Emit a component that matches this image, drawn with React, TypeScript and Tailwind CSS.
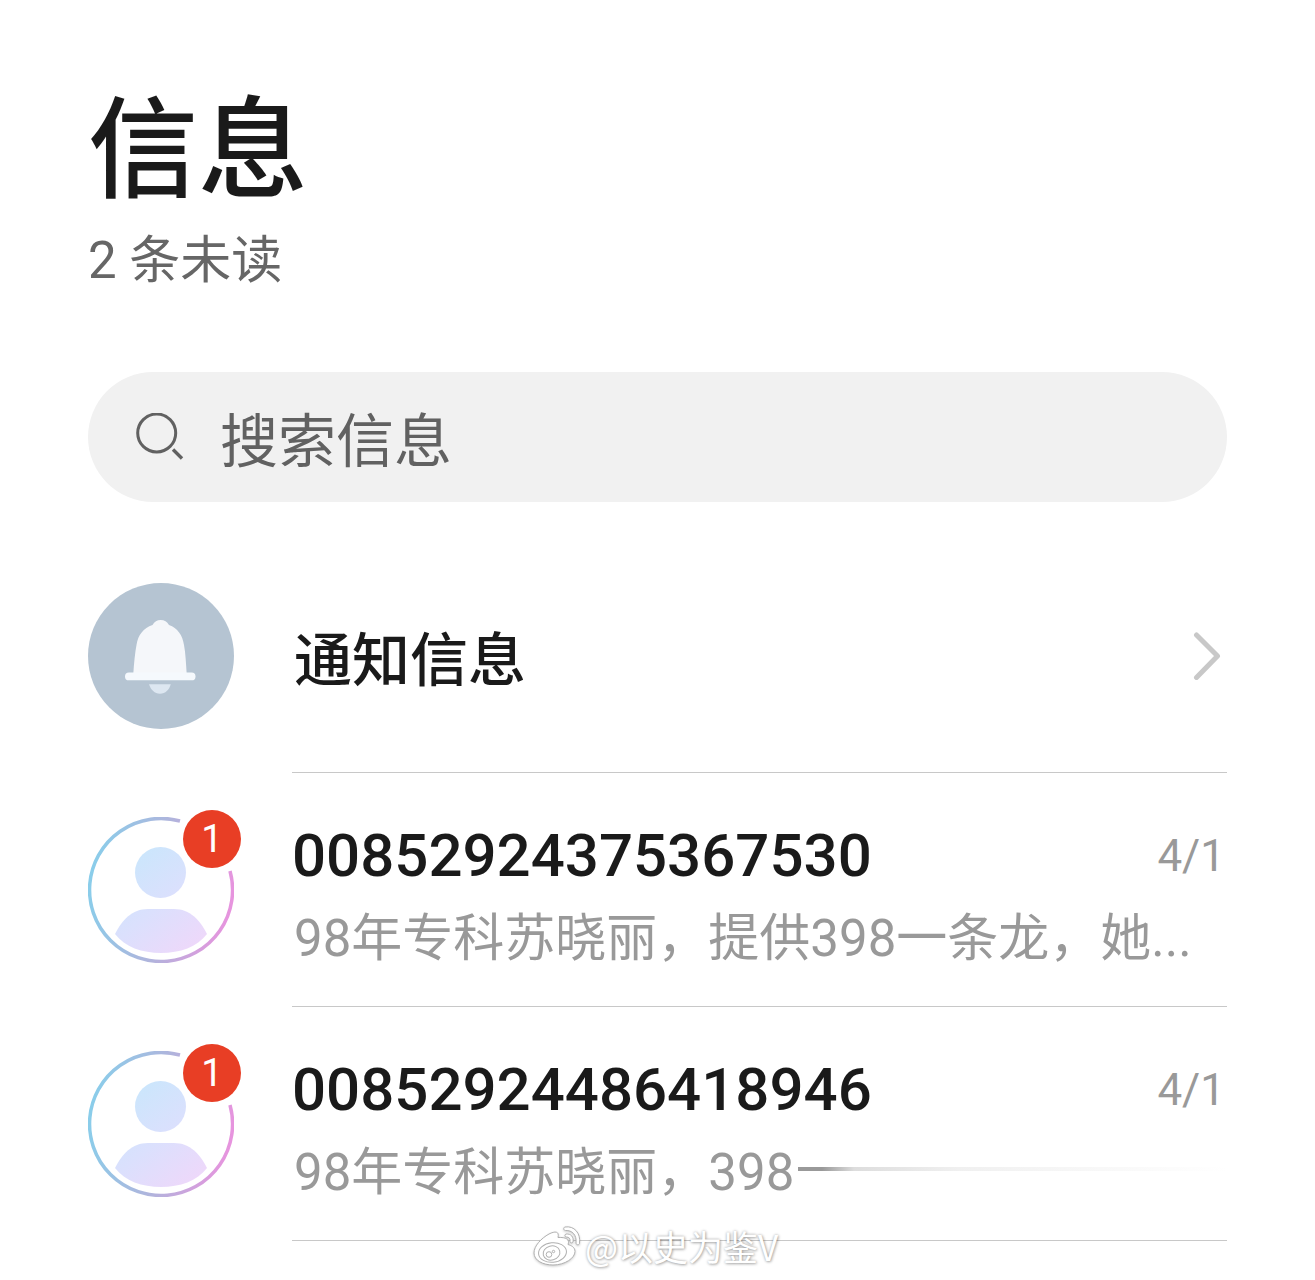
import React from 'react';

type Thread = {
  number: string;
  preview: string;
  date: string;
  unread: number;
  faded?: boolean;
};

const threads: Thread[] = [
  {
    number: '00852924375367530',
    preview: '98年专科苏晓丽，提供398一条龙，她...',
    date: '4/1',
    unread: 1,
  },
  {
    number: '00852924486418946',
    preview: '98年专科苏晓丽，398',
    date: '4/1',
    unread: 1,
    faded: true,
  },
];

const SearchIcon = () => (
  <svg className="size-12 shrink-0" viewBox="0 0 48 48" fill="none" stroke="#616161" strokeWidth="3" aria-hidden="true">
    <circle cx="20.7" cy="20" r="19" />
    <path d="M37 36.5 46 45.5" strokeWidth="3.4" />
  </svg>
);

const BellAvatar = () => (
  <svg className="size-[146px] shrink-0" viewBox="0 0 146 146" aria-hidden="true">
    <circle cx="73" cy="73" r="73" fill="#b5c4d2" />
    <path
      d="M45.3 91C46 80 47 70 48.5 62C50 52 55.5 45 64.5 42C66.5 38.5 69 37 72.7 37C76.5 37 79 38.5 81 42C89.5 45 94.5 52 96 62C97.5 70 98 80 98.7 91Z"
      fill="#f5f7fa"
    />
    <rect x="37" y="89.5" width="70.5" height="7.8" rx="3.9" fill="#f5f9fd" />
    <path d="M61 101.3H82.8C81 107 77.5 110.7 72 110.7C66.5 110.7 63 107 61 101.3Z" fill="#dde7f1" />
  </svg>
);

const PersonAvatar = ({ id }: { id: string }) => (
  <svg className="size-[146px]" viewBox="0 0 146 146" fill="none" aria-hidden="true">
    <defs>
      <linearGradient id={`ring-${id}`} gradientUnits="userSpaceOnUse" x1="2" y1="62" x2="144" y2="84">
        <stop offset="0" stopColor="#8acdea" />
        <stop offset="0.5" stopColor="#b0b4dc" />
        <stop offset="1" stopColor="#e794de" />
      </linearGradient>
      <linearGradient id={`fill-${id}`} gradientUnits="userSpaceOnUse" x1="40" y1="45" x2="108" y2="130">
        <stop offset="0" stopColor="#cbe6fc" />
        <stop offset="0.5" stopColor="#dbe0fd" />
        <stop offset="1" stopColor="#eed8fa" />
      </linearGradient>
    </defs>
    <path d="M142 54A71.5 71.5 0 1 1 92 4" stroke={`url(#ring-${id})`} strokeWidth="3.5" />
    <circle cx="72.5" cy="55.5" r="25.5" fill={`url(#fill-${id})`} />
    <path
      d="M27 117C34 103 44 92 60 92H86C102 92 112 103 119 117C109 130 92 136 73 136C54 136 37 130 27 117Z"
      fill={`url(#fill-${id})`}
    />
  </svg>
);

const WeiboIcon = () => (
  <svg className="h-10 w-12 drop-shadow-[0_1px_1px_rgba(0,0,0,0.2)]" viewBox="0 0 48 40" fill="#fff" stroke="#b0b0b0" strokeWidth="1" aria-hidden="true">
    <path d="M25 11.5C26.5 5 22 5 16 8C8 12.5 1 20 1 27C1 34.5 10 39 20 39C32 39 42 32 42 25.5C42 21 38 19.5 35 18.5C37 13.5 33 11 25 11.5Z" />
    <ellipse cx="19.5" cy="26.5" rx="14" ry="9.8" transform="rotate(-6 19.5 26.5)" />
    <ellipse cx="18.5" cy="27" rx="8.5" ry="7" transform="rotate(-15 18.5 27)" />
    <circle cx="16" cy="28.5" r="2.8" />
    <circle cx="20.5" cy="25.5" r="1.2" />
    <path d="M32 1C41 -0.5 48 7 46.5 17.5C46 19.5 43 19 43 17C44 9 39 4 32.5 4.5C30.5 4.5 30 1.5 32 1Z" />
    <path d="M33 8C38 7.5 41 11 40 16C39.5 17.5 37 17 37 15.5C37.5 12.5 36 11 33.5 11C31.5 11 31.5 8.5 33 8Z" />
  </svg>
);

const ThreadRow = ({ thread }: { thread: Thread }) => (
  <li>
    <a href="#" className="flex h-[234px] items-center gap-[58px]">
      <div className="relative shrink-0">
        <PersonAvatar id={thread.number} />
        <span className="absolute -top-[7px] -right-[7px] flex size-[58px] items-center justify-center rounded-full bg-[#e83e25] text-[38px] leading-none text-white">
          {thread.unread}
        </span>
      </div>
      <div className="flex h-full min-w-0 flex-1 flex-col justify-center border-b border-[#c8c8c8]">
        <div className="flex items-center justify-between">
          <span className="text-[60px] leading-[98px] font-medium text-[#1a1a1a]">{thread.number}</span>
          <span className="pr-0.5 text-[44px] leading-[98px] text-[#999]">{thread.date}</span>
        </div>
        <div className="flex items-center pl-0.5 text-[51px] leading-[68px] text-[#999]">
          <span className="whitespace-nowrap">{thread.preview}</span>
          {thread.faded && (
            <span className="mb-2 ml-1 h-1 flex-1 bg-[linear-gradient(to_right,#999_0,#999_24px,#ddd_56px,#f0f0f0_160px,#fff_100%)]" />
          )}
        </div>
      </div>
    </a>
  </li>
);

const App = () => {
  return (
    <main className="relative bg-white px-[88px] pt-[77px] pb-[39px] font-[Roboto,'Noto_Sans_CJK_SC',sans-serif]">
      <header>
        <h1 className="font-['Noto_Sans_CJK_SC',sans-serif] text-[110px] leading-[128px] font-medium text-[#1a1a1a]">
          信息
        </h1>
        <p className="mt-6 text-[51px] leading-[64px] text-[#666]">2 条未读</p>
      </header>

      <label className="mt-[79px] flex h-[130px] items-center gap-9 rounded-full bg-[#f1f1f1] px-12">
        <SearchIcon />
        <input
          type="search"
          aria-label="搜索信息"
          placeholder="搜索信息"
          className="h-20 min-w-0 flex-1 bg-transparent font-['Noto_Sans_CJK_SC',sans-serif] text-[58px] leading-[80px] outline-none placeholder:text-[#616161]"
        />
      </label>

      <ul className="mt-[37px]">
        <li>
          <a href="#" className="flex h-[234px] items-center gap-[58px]">
            <BellAvatar />
            <div className="flex h-full flex-1 items-center justify-between border-b border-[#c8c8c8] pr-1 pl-0.5">
              <span className="font-['Noto_Sans_CJK_SC',sans-serif] text-[58px] leading-[80px] font-medium text-[#1a1a1a]">
                通知信息
              </span>
              <svg className="h-12 w-8" viewBox="0 0 32 48" fill="none" stroke="#c8c8c8" strokeWidth="5" strokeLinecap="round" strokeLinejoin="round" aria-hidden="true">
                <path d="M5.5 3 26.5 24 5.5 45.5" />
              </svg>
            </div>
          </a>
        </li>
        {threads.map((thread) => (
          <ThreadRow key={thread.number} thread={thread} />
        ))}
      </ul>

      {/* Watermark */}
      <div className="absolute inset-x-0 bottom-3 flex items-center justify-center gap-1 pr-1">
        <WeiboIcon />
        <span className="font-['Noto_Sans_CJK_SC',sans-serif] text-[35px] leading-[44px] text-white [text-shadow:0_0_3px_rgba(0,0,0,0.3),1px_1px_3px_rgba(0,0,0,0.25)]">
          @以史为鉴V
        </span>
      </div>
    </main>
  );
};

export default App;
